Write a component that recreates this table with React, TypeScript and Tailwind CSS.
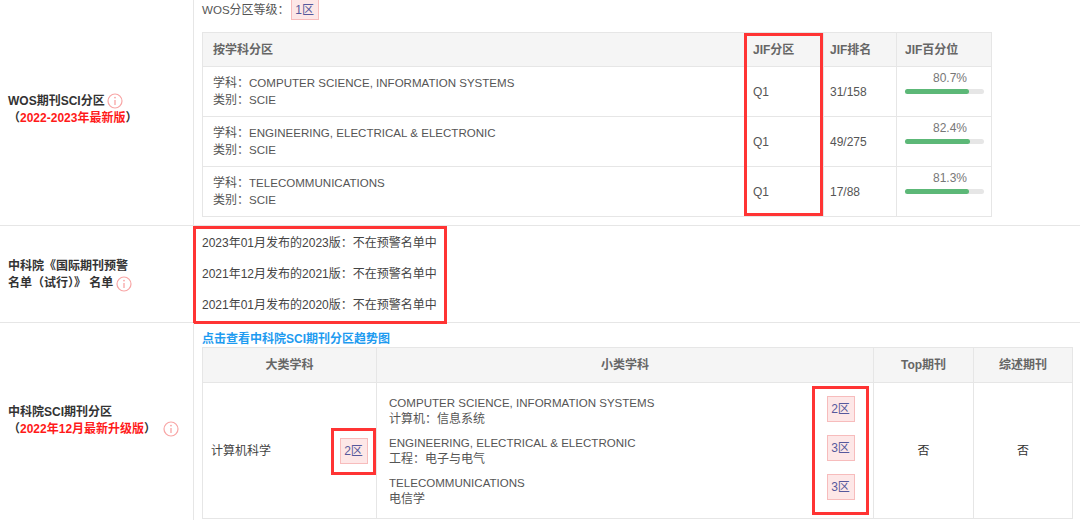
import React from "react";

type JifRow = {
  subject: string;
  kind: string;
  quartile: string;
  rank: string;
  percent: number;
};

type CasRow = {
  en: string;
  zh: string;
  zone: string;
};

const jifRows: JifRow[] = [
  { subject: "COMPUTER SCIENCE, INFORMATION SYSTEMS", kind: "SCIE", quartile: "Q1", rank: "31/158", percent: 80.7 },
  { subject: "ENGINEERING, ELECTRICAL & ELECTRONIC", kind: "SCIE", quartile: "Q1", rank: "49/275", percent: 82.4 },
  { subject: "TELECOMMUNICATIONS", kind: "SCIE", quartile: "Q1", rank: "17/88", percent: 81.3 },
];

const casRows: CasRow[] = [
  { en: "COMPUTER SCIENCE, INFORMATION SYSTEMS", zh: "计算机：信息系统", zone: "2区" },
  { en: "ENGINEERING, ELECTRICAL & ELECTRONIC", zh: "工程：电子与电气", zone: "3区" },
  { en: "TELECOMMUNICATIONS", zh: "电信学", zone: "3区" },
];

const warnings = [
  "2023年01月发布的2023版：不在预警名单中",
  "2021年12月发布的2021版：不在预警名单中",
  "2021年01月发布的2020版：不在预警名单中",
];

const InfoIcon = ({ className = "" }: { className?: string }) => (
  <svg className={className} width="16" height="16" viewBox="0 0 16 16" fill="none">
    <circle cx="8" cy="8" r="7" stroke="#f8a5a5" strokeWidth="1.2" />
    <circle cx="8" cy="4.6" r="0.9" fill="#f8a5a5" />
    <path d="M8 7v5" stroke="#f8a5a5" strokeWidth="1.3" />
  </svg>
);

const Zone = ({ label, tall = false }: { label: string; tall?: boolean }) => (
  <span
    className={`inline-flex items-center justify-center w-[28px] ${
      tall ? "h-[26px]" : "h-[21px]"
    } bg-[#fde7e7] border border-[#f7bcbc] text-[#56599c] text-[12px]`}
  >
    {label}
  </span>
);

// latin caps render a little narrower in the original
const En = ({ children }: { children: React.ReactNode }) => (
  <span className="text-[11.55px]">{children}</span>
);

const App = () => {
  return (
    <div
      className="w-[1080px] h-[520px] overflow-hidden bg-white text-[12px] text-[#555]"
      style={{ fontFamily: '"Liberation Sans", Arial, "Noto Sans CJK SC", sans-serif' }}
    >
      {/* WOS */}
      <div className="flex h-[226px] border-b border-[#e6e6e6]">
        <div className="w-[194px] shrink-0 border-r border-[#e6e6e6] flex items-center pl-2 pb-[6px]">
          <div className="font-bold text-[#333] leading-[17px]">
            <div className="flex items-center gap-[2px]">
              WOS期刊SCI分区
              <InfoIcon />
            </div>
            <div>
              （<span className="text-[#ff1a1a]">2022-2023年最新版</span>）
            </div>
          </div>
        </div>
        <div className="flex-1 pl-[8px]">
          <div className="flex items-center h-[20px] gap-[1px]">
            <span>
              <En>WOS</En>分区等级：
            </span>
            <span className="-mt-[1px]">
              <Zone label="1区" />
            </span>
          </div>
          <div className="relative mt-[12px] w-[790px] border border-[#e6e6e6]">
            <div className="flex h-[33px] bg-[#f5f5f5] font-bold text-[#666] items-center">
              <div className="w-[541px] pl-[10px]">按学科分区</div>
              <div className="w-[79px] h-full flex items-center pl-[8px] border-l border-[#e6e6e6]">JIF分区</div>
              <div className="w-[73px] h-full flex items-center pl-[6px] border-l border-[#e6e6e6]">JIF排名</div>
              <div className="flex-1 h-full flex items-center pl-[8px] border-l border-[#e6e6e6]">JIF百分位</div>
            </div>
            {jifRows.map((row) => (
              <div key={row.subject} className="flex h-[50px] border-t border-[#e6e6e6]">
                <div className="w-[541px] pl-[10px] flex flex-col justify-center leading-[17px]">
                  <div>
                    学科：<En>{row.subject}</En>
                  </div>
                  <div>
                    类别：<En>{row.kind}</En>
                  </div>
                </div>
                <div className="w-[79px] flex items-center pl-[8px] border-l border-[#e6e6e6]">{row.quartile}</div>
                <div className="w-[73px] flex items-center pl-[6px] border-l border-[#e6e6e6]">{row.rank}</div>
                <div className="flex-1 pl-[8px] pt-[4px] border-l border-[#e6e6e6]">
                  <div className="w-[79px]">
                    <div className="pl-[28px] leading-[15px] text-[#777]">{row.percent}%</div>
                    <div className="mt-[3px] h-[5px] rounded-full bg-[#e6e6e6]">
                      <div className="h-full rounded-full bg-[#5cb877]" style={{ width: `${row.percent}%` }} />
                    </div>
                  </div>
                </div>
              </div>
            ))}
            <div className="absolute left-[541px] top-0 bottom-0 w-[79px] border-[3px] border-[#ff3434]" />
          </div>
        </div>
      </div>

      {/* 预警名单 */}
      <div className="flex h-[97px] border-b border-[#e6e6e6]">
        <div className="w-[194px] shrink-0 border-r border-[#e6e6e6] flex items-center pl-2 pt-[2px]">
          <div className="font-bold text-[#333] leading-[17px]">
            <div>中科院《国际期刊预警</div>
            <div className="flex items-center gap-[3px]">
              名单（试行）》 名单
              <InfoIcon />
            </div>
          </div>
        </div>
        <div className="flex-1">
          <div className="-ml-px w-[254px] h-[98px] border-[3px] border-[#ff3434] pl-[6px] pt-[6px] flex flex-col gap-[15px] leading-[16px] text-[#444]">
            {warnings.map((w) => (
              <div key={w}>{w}</div>
            ))}
          </div>
        </div>
      </div>

      {/* 中科院分区 */}
      <div className="flex h-[197px]">
        <div className="w-[194px] shrink-0 border-r border-[#e6e6e6] flex items-center pl-2 pb-[2px]">
          <div className="font-bold text-[#333] leading-[17px]">
            <div>中科院SCI期刊分区</div>
            <div className="flex items-center">
              （<span className="text-[#ff1a1a]">2022年12月最新升级版</span>）
              <InfoIcon className="ml-[7px]" />
            </div>
          </div>
        </div>
        <div className="flex-1 pl-[8px] pt-[9px]">
          <div className="font-bold text-[#1e9bf0] leading-[15px]">点击查看中科院SCI期刊分区趋势图</div>
          <div className="w-[871px] border border-[#e6e6e6]">
            <div className="flex h-[34px] bg-[#f5f5f5] font-bold text-[#666] text-center">
              <div className="w-[173px] flex items-center justify-center">大类学科</div>
              <div className="w-[497px] flex items-center justify-center border-l border-[#e6e6e6]">小类学科</div>
              <div className="w-[100px] flex items-center justify-center border-l border-[#e6e6e6]">Top期刊</div>
              <div className="flex-1 flex items-center justify-center border-l border-[#e6e6e6]">综述期刊</div>
            </div>
            <div className="flex h-[136px] border-t border-[#e6e6e6]">
              <div className="w-[173px] flex items-center justify-between pl-[8px] text-[#444]">
                <span>计算机科学</span>
                <div className="w-[45px] h-[47px] border-[3px] border-[#ff3434] flex items-center justify-center mt-[1px]">
                  <Zone label="2区" tall />
                </div>
              </div>
              <div className="w-[497px] flex items-center justify-between pl-[12px] pr-[4px] border-l border-[#e6e6e6]">
                <div className="flex flex-col gap-[8px] leading-[16px] mt-[1px]">
                  {casRows.map((r) => (
                    <div key={r.en}>
                      <div>
                        <En>{r.en}</En>
                      </div>
                      <div>{r.zh}</div>
                    </div>
                  ))}
                </div>
                <div className="w-[57px] h-[129px] border-[3px] border-[#ff3434] flex flex-col items-center pt-[7px] gap-[13px]">
                  {casRows.map((r, i) => (
                    <Zone key={i} label={r.zone} tall />
                  ))}
                </div>
              </div>
              <div className="w-[100px] flex items-center justify-center border-l border-[#e6e6e6] text-[#333]">否</div>
              <div className="flex-1 flex items-center justify-center border-l border-[#e6e6e6] text-[#333]">否</div>
            </div>
          </div>
        </div>
      </div>
    </div>
  );
};

export default App;
